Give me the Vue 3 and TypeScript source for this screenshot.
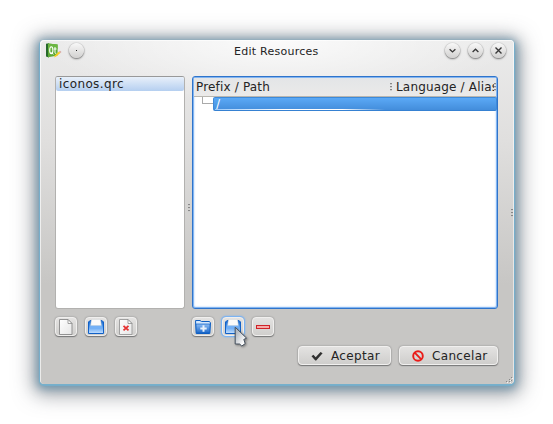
<script setup lang="ts">
import { ref } from 'vue'

const files = ref<string[]>(['iconos.qrc'])
const prefixes = ref<string[]>(['/'])
const controls: { name: string; path: string }[] = [
  { name: 'Minimize', path: 'M4.6 6.3 L7.5 8.9 L10.4 6.3' },
  { name: 'Maximize', path: 'M4.6 8.9 L7.5 6.3 L10.4 8.9' },
  { name: 'Close', path: 'M4.5 4.5 L10.5 10.5 M10.5 4.5 L4.5 10.5' },
]
</script>

<template>
  <div class="desktop">
    <svg class="defs" width="0" height="0">
      <defs>
        <linearGradient id="page" x1="0" y1="0" x2="1" y2="1">
          <stop offset="0" stop-color="#fff" /><stop offset="1" stop-color="#e6e6e6" />
        </linearGradient>
        <linearGradient id="blue" x1="0" y1="0" x2="0" y2="1">
          <stop offset="0" stop-color="#0b5fc8" /><stop offset="0.5" stop-color="#5ea3f2" /><stop offset="1" stop-color="#c4e0ff" />
        </linearGradient>
        <linearGradient id="folder" x1="0" y1="0" x2="0" y2="1">
          <stop offset="0" stop-color="#8dbcf3" /><stop offset="1" stop-color="#1d69cb" />
        </linearGradient>
        <linearGradient id="arrow" x1="0" y1="0" x2="1" y2="1">
          <stop offset="0.2" stop-color="#b4bac2" /><stop offset="0.8" stop-color="#fff" />
        </linearGradient>
      </defs>
    </svg>
    <section class="window">
      <header class="titlebar">
        <svg class="app-icon" width="16" height="16" viewBox="0 0 16 16">
          <path d="M0 .8 L3 .3 V14.6 L0 13.6Z" fill="#27682b" />
          <path d="M2 .5 L11.6 1.4 V12.4 L2 14.2Z" fill="#5caa35" />
          <path d="M2 .5 L11.6 1.4 V6 L2 8Z" fill="#6bb642" />
          <ellipse cx="5.3" cy="7.2" rx="1.6" ry="3.4" fill="none" stroke="#fff" stroke-width="1.1" />
          <path d="M5.8 9.3 L7.3 11.5 M9 4 V9.6 Q9 10.7 10.3 10.3 M7.8 6 H10.6" fill="none" stroke="#fff" stroke-width="1" />
          <path d="M8 14.4 L9 12.2 L13 8.6 L14.4 10 L10.2 13.6Z" fill="#f8cf22" />
          <path d="M13 8.6 L14 7.8 L15.5 9.1 L14.4 10Z" fill="#d9a6a0" />
        </svg>
        <span class="round menu"><i></i></span>
        <h1>Edit Resources</h1>
        <div class="controls">
          <span v-for="c in controls" :key="c.name" class="round">
            <svg width="15" height="15" viewBox="0 0 15 15"><path :d="c.path" fill="none" stroke="#383838" stroke-width="1.4" /></svg>
          </span>
        </div>
      </header>

      <main class="panes">
        <div class="files">
          <div v-for="f in files" :key="f" class="file">{{ f }}</div>
        </div>
        <div class="splitter"><i></i><i></i><i></i></div>
        <div class="tree">
          <div class="head">
            <span class="col-prefix">Prefix / Path</span>
            <span class="dots"><i></i><i></i><i></i></span>
            <span class="col-lang">Language / Alias</span>
            <span class="dots"><i></i><i></i><i></i></span>
          </div>
          <div v-for="p in prefixes" :key="p" class="row">
            <span class="branch"></span>
            <span class="cell"><span>{{ p }}</span><span class="sheen"></span></span>
          </div>
        </div>
      </main>

      <div class="tools">
        <div class="group">
          <button class="tool">
            <svg width="16" height="16" viewBox="0 0 16 16"><path d="M1.5 .5 H10 L14 4.5 V15.5 H1.5Z" fill="url(#page)" stroke="#929292" /><path d="M10 .5 V4.5 H14Z" fill="#fff" stroke="#8b8b8b" stroke-width=".8" /></svg>
          </button>
          <button class="tool">
            <svg width="16" height="16" viewBox="0 0 16 16"><path d="M2 1.5 H14 L15.5 3 V14.5 H.5 V3Z" fill="url(#blue)" stroke="#1261c7" /><path d="M3.4 .3 H12.6 L13.4 6.8 H2.6Z" fill="#fafafa" stroke="#c4c8cd" stroke-width=".5" /><path d="M2 6.8 H14 V10 H2Z" fill="#73b0f6" /></svg>
          </button>
          <button class="tool">
            <svg width="16" height="16" viewBox="0 0 16 16"><path d="M1.5 .5 H10 L14 4.5 V15.5 H1.5Z" fill="url(#page)" stroke="#a0a0a0" /><path d="M10 .5 V4.5 H14Z" fill="#fff" stroke="#8b8b8b" stroke-width=".8" /><path d="M5.5 6.8 L10.5 11.4 M10.5 6.8 L5.5 11.4" stroke="#e53232" stroke-width="1.8" /></svg>
          </button>
        </div>
        <div class="group">
          <button class="tool">
            <svg width="16" height="16" viewBox="0 0 16 16"><path d="M.6 4 V1.5 H5 L6.5 2.5 H14.5 L15.5 4 L14.8 14.5 H1.2Z" fill="#d3e7fd" stroke="#0f5fc2" /><path d="M1 5 H15 L14.5 14 H1.5Z" fill="url(#folder)" stroke="#0f5fc2" stroke-width=".7" /><path d="M8.5 6.3 V12.7 M5.3 9.5 H11.7" stroke="#e8f1fb" stroke-width="2" /></svg>
          </button>
          <button class="tool hovered">
            <svg width="16" height="16" viewBox="0 0 16 16"><path d="M2 1.5 H14 L15.5 3 V14.5 H.5 V3Z" fill="url(#blue)" stroke="#1261c7" /><path d="M3.4 .3 H12.6 L13.4 6.8 H2.6Z" fill="#fafafa" stroke="#c4c8cd" stroke-width=".5" /><path d="M2 6.8 H14 V10 H2Z" fill="#73b0f6" /></svg>
            <svg class="pointer" width="15" height="22" viewBox="0 0 15 22"><path d="M1.2 1.2 L12.6 12.2 L9.8 13.4 L11.2 17.6 L7.8 20 L5.6 18 L1.2 18Z" fill="url(#arrow)" stroke="#46515f" /></svg>
          </button>
          <button class="tool">
            <svg width="16" height="16" viewBox="0 0 16 16"><rect x="1.5" y="6.5" width="13" height="3" fill="#f5aaa8" stroke="#cf2228" /></svg>
          </button>
        </div>
      </div>

      <footer class="actions">
        <button class="push accept">
          <svg width="12" height="12" viewBox="0 0 12 12"><path d="M.5 6.2 L2.4 4.7 L4.7 7.2 L9.5 2 L11.6 3.2 L5.2 10.6 H4.3Z" fill="#303030" /></svg>
          <span>Aceptar</span>
        </button>
        <button class="push cancel">
          <svg width="12" height="12" viewBox="0 0 12 12"><circle cx="6" cy="6" r="4.8" fill="none" stroke="#ea1b18" stroke-width="1.9" /><path d="M2.7 2.7 L9.3 9.3" stroke="#ea1b18" stroke-width="1.9" /></svg>
          <span>Cancelar</span>
        </button>
      </footer>
      <span class="edge"><i></i><i></i><i></i></span>
      <svg class="grip" width="7" height="7" viewBox="0 0 7 7"><path d="M0 5.5h1M3 5.5h1M3 3.5h1M5 4.5h1M5 1.5h1" stroke="#888" /><path d="M1 6.5h1M4 6.5h1M4 4.5h1M6 2.5h1" stroke="#f4f4f4" /></svg>
    </section>
  </div>
</template>

<style>
body { margin: 0; background: #fff; }
</style>
<style scoped>
* { box-sizing: border-box; }
.desktop { width: 553px; height: 424px; padding: 40px; overflow: hidden; background: #fff; font: 12px "DejaVu Sans", sans-serif; color: #242424; position: relative; }
.defs { position: absolute; }
.window {
  position: relative; width: 474px; height: 344px; padding: 0 16px 0 15px; border-radius: 4px;
  background: radial-gradient(ellipse 235px 64px at 50% 0, rgba(255,255,255,.8), rgba(255,255,255,0)), linear-gradient(#ebebeb 0, #e0dfde 100px, #c7c6c4 245px, #c7c6c4 100%);
  box-shadow: inset 1px 1px 0 rgba(255,255,255,.65), inset -1px 0 0 rgba(255,255,255,.55), 0 1px 1px 1px #76b0cc, 0 2px 8px 3px rgba(90,138,166,.7), 0 4px 20px 7px rgba(70,76,86,.52);
}
.titlebar { height: 36px; margin: 0 -9px; padding-top: 3px; display: flex; align-items: flex-start; }
.app-icon { display: block; }
.round { width: 15px; height: 15px; border-radius: 50%; background: linear-gradient(#f8f8f8, #d2d1d0); box-shadow: 0 1px 2px rgba(0,0,0,.5), 0 0 1px rgba(0,0,0,.4); display: flex; align-items: center; justify-content: center; }
.round svg { display: block; }
.menu { margin-left: 7px; }
.menu i { width: 1px; height: 1px; background: #222; }
h1 { flex: 1; margin: 1px 0 0; padding-left: 150px; font-size: 11px; line-height: 15px; font-weight: 400; letter-spacing: .25px; white-space: nowrap; }
.controls { display: flex; gap: 8px; padding-right: 1px; }
.panes { display: flex; height: 233px; }
.files { width: 130px; border: 1px solid #b2b1af; border-top-color: #999; border-radius: 3px; background: #fff; }
.file { height: 14px; line-height: 14px; padding-left: 3px; border-radius: 2px; background: linear-gradient(#e8f0fa, #b5cff0); letter-spacing: .38px; }
.splitter { width: 7px; display: flex; flex-direction: column; align-items: center; justify-content: center; gap: 1px; padding-top: 30px; }
.splitter i, .dots i, .edge i { width: 2px; height: 2px; background: #888; border-bottom: 1px solid #ccc; }
.tree { width: 306px; border: 1px solid #2f74cb; border-radius: 3px; background: #fff; box-shadow: inset 0 0 0 1px #83b5f1, inset 0 0 2px 1px #9ec7f5; overflow: hidden; }
.head { height: 19px; margin: 1px 1px 0; background: linear-gradient(#e3e5e7, #ebeae9); border-bottom: 1px solid #b9b7b1; display: flex; align-items: center; overflow: hidden; white-space: nowrap; letter-spacing: .17px; }
.col-prefix { width: 196px; padding-left: 2px; flex: none; }
.dots { display: flex; flex-direction: column; gap: 1px; flex: none; width: 2px; }
.col-lang { width: 98px; margin-left: 4px; overflow: hidden; flex: none; }
.row { height: 14px; display: flex; }
.branch { width: 11px; height: 7px; margin-left: 9px; border-left: 1px solid #aaa; border-bottom: 1px solid #aaa; flex: none; }
.cell { flex: 1; height: 14px; border: 1px solid #3e8ad9; border-bottom-color: #3681d2; border-radius: 2px; background: linear-gradient(#5ba9f6, #438ddb); color: #fff; line-height: 12px; padding-left: 2px; position: relative; }
.sheen { position: absolute; left: 1px; bottom: 0; width: 170px; height: 1px; background: linear-gradient(90deg, #9bcafb, #fff 40%, #fff 75%, transparent); }
.tools { display: flex; gap: 55px; height: 37px; padding-top: 8px; }
.group { display: flex; gap: 8px; }
button { font: inherit; color: inherit; border: 0; margin: 0; padding: 0; }
.tool { width: 22px; height: 19px; border: 1px solid #f0efee; border-radius: 4px; background: linear-gradient(#e3e2e1, #d0cfcd); box-shadow: 0 1px 1px #777, 0 0 2px #8b8b8b; display: flex; align-items: center; justify-content: center; position: relative; }
.tool svg { display: block; flex: none; }
.hovered { box-shadow: 0 0 1px 1px #78b3f5, 0 0 3px #5ca4f5; }
.tool .pointer { position: absolute; left: 11px; top: 8px; filter: drop-shadow(1px 1px 1px rgba(0,0,0,.4)); }
.actions { display: flex; justify-content: flex-end; gap: 8px; }
.push { height: 19px; border: 1px solid #f1f0ef; border-radius: 4px; background: linear-gradient(#e3e2e1, #cfcecc); box-shadow: 0 1px 1px #777, 0 0 2px #888; display: flex; align-items: center; }
.push span { letter-spacing: .33px; }
.accept { width: 93px; padding-left: 12px; gap: 8px; }
.cancel { width: 99px; padding-left: 12px; gap: 8px; }
.edge { position: absolute; right: 1px; top: 169px; display: flex; flex-direction: column; gap: 1px; }
.grip { position: absolute; right: 1px; bottom: 1px; }
</style>
